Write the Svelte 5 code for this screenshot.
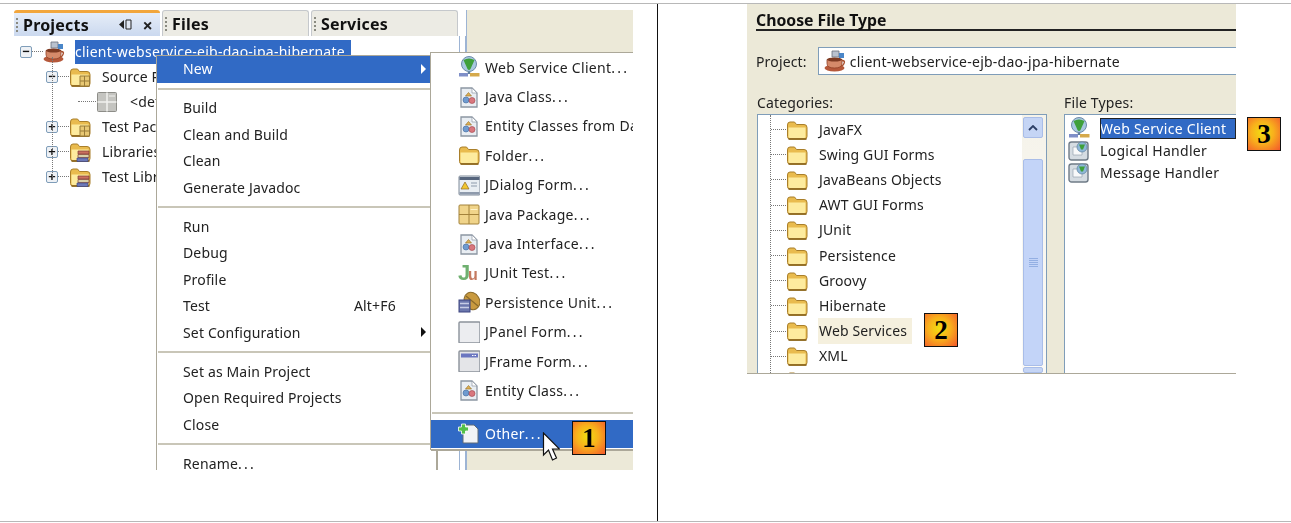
<script lang="ts">
  const tree = [
    { label: 'client-webservice-ejb-dao-jpa-hibernate', level: 0, exp: '-', icon: 'cup', selected: true },
    { label: 'Source Packages', level: 1, exp: '-', icon: 'folderPkg' },
    { label: '<default package>', level: 2, exp: '', icon: 'pkg' },
    { label: 'Test Packages', level: 1, exp: '+', icon: 'folderPkg' },
    { label: 'Libraries', level: 1, exp: '+', icon: 'folderLib' },
    { label: 'Test Libraries', level: 1, exp: '+', icon: 'folderLib' },
  ]

  const mainGroups = [
    ['Build', 'Clean and Build', 'Clean', 'Generate Javadoc'],
    ['Run', 'Debug', 'Profile', 'Test', 'Set Configuration'],
    ['Set as Main Project', 'Open Required Projects', 'Close'],
    ['Rename'],
  ]

  const newItems = [
    ['Web Service Client', 'globe'],
    ['Java Class', 'java'],
    ['Entity Classes from Database', 'java'],
    ['Folder', 'folder'],
    ['JDialog Form', 'dialog'],
    ['Java Package', 'pkgGold'],
    ['Java Interface', 'java'],
    ['JUnit Test', 'junit'],
    ['Persistence Unit', 'persist'],
    ['JPanel Form', 'panel'],
    ['JFrame Form', 'frame'],
    ['Entity Class', 'java'],
  ]

  const categories = ['JavaFX', 'Swing GUI Forms', 'JavaBeans Objects', 'AWT GUI Forms', 'JUnit', 'Persistence', 'Groovy', 'Hibernate', 'Web Services', 'XML', '']

  const fileTypes = [
    ['Web Service Client', 'globe'],
    ['Logical Handler', 'handler'],
    ['Message Handler', 'handler'],
  ]
</script>

{#snippet icon(kind)}
  <svg class="icon" viewBox="0 0 22 22" width="22" height="22">
    {#if kind === 'cup'}
      <path d="M8 1h7v6H8z" fill="#b9c2cf" stroke="#68707c" stroke-width=".8" />
      <path d="M15 3h5v5h-5z" fill="#4a86c8" />
      <ellipse cx="10.500" cy="18" rx="10" ry="3.500" fill="#b5583a" />
      <path d="M3 9.500h15v4q0 4.500-7.500 4.500T3 13.500z" fill="#d58a6a" stroke="#8f4026" stroke-width=".8" />
      <path d="M18 10.500q3.500 0 2 3t-3 2" fill="none" stroke="#a9502f" stroke-width="1.400" />
      <ellipse cx="10.500" cy="9.500" rx="7.500" ry="2" fill="#7d3a22" />
    {:else if kind === 'folder' || kind === 'folderPkg' || kind === 'folderLib'}
      <path d="M1.500 6q0-3 2.500-3h4.500l2 2.500h7.500q3 0 3 3v9q0 2.500-2.500 2.500H4q-2.500 0-2.500-2.500z" fill="#e9bb4e" stroke="#a97f2b" />
      <path d="M2.500 8.500h17v9q0 1.500-1.500 1.500H4q-1.500 0-1.500-1.500z" fill="#fdeb9e" />
      <path d="M2.500 20h18" stroke="#8f6a22" stroke-width="1.800" />
      {#if kind === 'folderPkg'}
        <path d="M11 10h9.500v10H11z" fill="#e8c873" stroke="#9a7c38" />
        <path d="M11 15h9.500M15.500 10v10" stroke="#9a7c38" />
      {:else if kind === 'folderLib'}
        <path d="M9 10h11v3H9z" fill="#c96f5f" stroke="#7d3b33" stroke-width=".7" />
        <path d="M9 13.500h11v3H9z" fill="#d8cfa8" stroke="#7d3b33" stroke-width=".7" />
        <path d="M8 17h11v3.500H8z" fill="#6c78b8" stroke="#3d4580" stroke-width=".7" />
      {/if}
    {:else if kind === 'pkg'}
      <rect x="1.500" y="1.500" width="19" height="19" rx="1" fill="#c4c4c0" stroke="#8d8d88" />
      <path d="M1.500 11h19M11 1.500v19" stroke="#f1f1ee" stroke-width="1.500" />
      <path d="M13 5h6" stroke="#f1f1ee" />
    {:else if kind === 'pkgGold'}
      <rect x="1" y="2" width="20" height="19" rx="1" fill="#f0d48a" stroke="#a3823b" />
      <path d="M1 11.500h20M11 2v19" stroke="#a3823b" />
      <path d="M12.500 6.500h7" stroke="#fff3c8" />
    {:else if kind === 'java'}
      <path d="M3 2h11l5 5v14H3z" fill="#e9eef3" stroke="#8c96a3" stroke-width="1.300" />
      <path d="M14 2v5h5z" fill="#fff" stroke="#8c96a3" stroke-width=".7" />
      <path d="M10.500 6.500l3 3.500h-6z" fill="#e0b256" stroke="#8f6a22" stroke-width=".6" />
      <circle cx="8" cy="14" r="3" fill="#6f9bd0" stroke="#3f669b" stroke-width=".6" />
      <circle cx="14" cy="14.500" r="3" fill="#d9777e" stroke="#9c3f46" stroke-width=".6" />
    {:else if kind === 'globe'}
      <path d="M11 14v4" stroke="#607f9f" stroke-width="2.500" />
      <circle cx="11" cy="8" r="7.500" fill="#a8c8e0" stroke="#6d8aa8" />
      <path d="M5.500 4q5.500-3 11 0l-4 9q-1.500 2-3 0z" fill="#3fa03a" />
      <path d="M1 17h9v3.500H1z" fill="#7f8fc8" />
      <path d="M12 17h9.500v3.500H12z" fill="#d5a94c" />
    {:else if kind === 'dialog'}
      <rect x="1" y="2" width="21" height="19" rx="1" fill="#e9eef3" stroke="#7f8a99" />
      <path d="M1.500 3h20v3h-20z" fill="#56657d" />
      <path d="M1.500 18h20v2.500h-20z" fill="#8e9aac" />
      <path d="M7 8l4 7H3z" fill="#f1c62f" stroke="#8f6a22" stroke-width=".7" />
      <path d="M13 9h6M13 12h6" stroke="#8d99ab" stroke-width="1.200" />
    {:else if kind === 'junit'}
      <text x="0" y="18" class="ju j">J</text>
      <text x="10" y="18" class="ju u">u</text>
    {:else if kind === 'persist'}
      <ellipse cx="14" cy="10" rx="7.500" ry="9" fill="#c99a3f" stroke="#8a6a2a" transform="rotate(-30 14 10)" />
      <path d="M8 5l12 10" stroke="#8a6a2a" stroke-width="1.200" />
      <rect x="1" y="9" width="11" height="12" fill="#6b77ad" stroke="#3d4580" />
      <path d="M2 12.500h9M2 16.500h9" stroke="#c7cde6" stroke-width="1.400" />
    {:else if kind === 'panel'}
      <rect x="1" y="1" width="21" height="21" rx="1" fill="#ecedf0" stroke="#8c929b" stroke-width="1.400" />
    {:else if kind === 'frame'}
      <rect x="1" y="1" width="21" height="21" rx="1" fill="#e4e5e8" stroke="#8c929b" stroke-width="1.400" />
      <path d="M3 3.500h17v4H3z" fill="#6a76c0" />
      <path d="M14 5.500h1.500M16.500 5.500H18" stroke="#fff" />
    {:else if kind === 'newFile'}
      <path d="M5 3h11l4 4v14H5z" fill="#f1f3f6" stroke="#5f6b78" />
      <path d="M0.500 5h3V2h4v3h3v4h-3v3h-4V9h-3z" fill="#54c04a" stroke="#fff" stroke-width=".8" />
    {:else if kind === 'handler'}
      <rect x="1" y="3" width="19" height="18" rx="2.500" fill="#d5dce2" stroke="#6f7b87" stroke-width="1.400" />
      <path d="M5 8h9v8H5z" fill="#f8f9fa" stroke="#9aa5b0" stroke-width=".7" />
      <circle cx="14" cy="8" r="5" fill="#8fb8d8" stroke="#5a7f9f" stroke-width=".7" />
      <path d="M11 5.500h6l-2 5h-2z" fill="#3fa03a" />
    {/if}
  </svg>
{/snippet}

{#snippet badge(n)}
  <span class="badge">{n}</span>
{/snippet}

{#snippet dotted(text)}
  {text}<span class="ell">...</span>
{/snippet}

<div class="page">
  <section class="left">
    <div class="shot ide">
      <div class="tabs">
        <div class="tab active">
          <span class="grip"></span><span class="tab-title">Projects</span>
          <span class="tab-tools">
            <svg viewBox="0 0 13 11" width="13" height="11"><path d="M5 1v9L0 5.500z" fill="#222" /><path d="M7 1h5v9H7z" fill="#dfe6f2" stroke="#222" /></svg>
            <b>×</b>
          </span>
        </div>
        <div class="tab"><span class="grip"></span><span class="tab-title">Files</span></div>
        <div class="tab"><span class="grip"></span><span class="tab-title">Services</span></div>
        <div class="tab-rest"></div>
      </div>
      <div class="ide-body">
        <div class="tree">
          <span class="trunk"></span>
          {#each tree as node}
            <div class="node lvl{node.level}">
              {#if node.exp}
                <span class="exp">{node.exp === '-' ? '−' : '+'}</span>
              {/if}
              <span class="dots"></span>
              {@render icon(node.icon)}
              <span class="node-label" class:selected={node.selected}>{node.label}</span>
            </div>
          {/each}
        </div>
        <div class="splitter"></div>
        <div class="editor"></div>
      </div>

      <div class="menu main-menu">
        <div class="row active">New<span class="arrow white"></span></div>
        {#each mainGroups as group}
          <div class="sep"></div>
          {#each group as item}
            <div class="row">
              {#if item === 'Rename'}
                <span>{@render dotted(item)}</span>
              {:else}
                {item}
              {/if}
              {#if item === 'Test'}<span class="shortcut">Alt+F6</span>{/if}
              {#if item === 'Set Configuration'}<span class="arrow"></span>{/if}
            </div>
          {/each}
        {/each}
      </div>

      <div class="menu new-menu">
        {#each newItems as [label, kind]}
          <div class="new-row">{@render icon(kind)}<span>{@render dotted(label)}</span></div>
        {/each}
        <div class="sep tight"></div>
        <div class="new-row active">{@render icon('newFile')}<span>{@render dotted('Other')}</span></div>
      </div>

      <svg class="cursor" viewBox="0 0 18 30" width="18" height="30">
        <path d="M1.500 1v22l5-5 4 10 4-2-4-9h7z" fill="#fff" stroke="#111" stroke-width="1.200" />
      </svg>
      <div class="badge-one">{@render badge(1)}</div>
    </div>
  </section>

  <section class="right">
    <div class="wizard-wrap">
      <div class="shot wizard">
        <h2>Choose File Type</h2>
        <div class="project">
          <span>Project:</span>
          <div class="combo">{@render icon('cup')}<span>client-webservice-ejb-dao-jpa-hibernate</span></div>
        </div>
        <div class="lists">
          <div class="col cat-col">
            <div class="list-title">Categories:</div>
            <div class="list cat-list">
              <div class="cats">
                <span class="cat-trunk"></span>
                {#each categories as cat}
                  <div class="cat">
                    <span class="cat-dots"></span>
                    {@render icon('folder')}
                    {#if cat}<span class="cat-label" class:hilite={cat === 'Web Services'}>{cat}</span>{/if}
                  </div>
                {/each}
              </div>
              <div class="scrollbar">
                <div class="scroll-up"><svg viewBox="0 0 10 6" width="10" height="6"><path d="M1 5l4-4 4 4" fill="none" stroke="#2c3f66" stroke-width="1.800" /></svg></div>
                <div class="scroll-thumb"><span class="thumb-grip"></span></div>
                <div class="scroll-down"></div>
              </div>
            </div>
          </div>
          <div class="col type-col">
            <div class="list-title">File Types:</div>
            <div class="list type-list">
              {#each fileTypes as [label, kind], i}
                <div class="type">{@render icon(kind)}<span class="type-label" class:selected={i === 0}>{label}</span></div>
              {/each}
            </div>
          </div>
        </div>
      </div>
      <div class="callouts">
        <div class="badge-three">{@render badge(3)}</div>
      </div>
      <div class="badge-two">{@render badge(2)}</div>
    </div>
  </section>
</div>

<style>
  :global(body) {
    margin: 0;
    background: #fff;
  }

  .page {
    display: grid;
    grid-template-columns: 658px 1fr;
    box-sizing: border-box;
    height: 519px;
    margin-top: 3px;
    border-top: 1px solid #b8b8b8;
    border-bottom: 1px solid #b8b8b8;
    font-family: 'Noto Sans', Tahoma, sans-serif;
    font-size: 14px;
    letter-spacing: 0.15px;
    color: #222;
    overflow: hidden;
  }

  .left {
    border-right: 1px solid #111;
    padding: 6px 0 0 14px;
  }

  .shot {
    position: relative;
    overflow: hidden;
    filter: blur(0.35px);
  }

  .ell {
    letter-spacing: 2.200px;
  }

  .ide {
    width: 619px;
    height: 460px;
    background: #fff;
  }

  .tabs {
    display: flex;
    height: 26px;
    gap: 2px;
  }

  .tab {
    box-sizing: border-box;
    width: 147px;
    display: flex;
    align-items: center;
    padding-left: 2px;
    background: #ecebe4;
    border: 1px solid #c5c8cc;
    border-bottom: none;
    border-radius: 3px 3px 0 0;
  }

  .tab.active {
    width: 146px;
    border: none;
    border-top: 3px solid #f2a63c;
    background: linear-gradient(#e6edf8, #cbd9ef);
  }

  .tab-rest {
    flex: 1;
    background: #fff;
  }

  .grip {
    width: 2px;
    height: 14px;
    margin-right: 3px;
    border-left: 2px dotted #8a8a80;
  }

  .tab-title {
    font-weight: 700;
    font-size: 16px;
    letter-spacing: 0.2px;
    color: #111;
  }

  .tab-tools {
    margin-left: auto;
    margin-right: 7px;
    display: flex;
    align-items: center;
    gap: 11px;
    font-size: 18px;
    line-height: 1;
  }

  .ide-body {
    display: flex;
    height: 434px;
  }

  .tree {
    position: relative;
    width: 445px;
    padding-top: 3px;
  }

  .trunk {
    position: absolute;
    left: 38px;
    top: 21px;
    height: 120px;
    border-left: 1px dotted #777;
  }

  .node {
    display: flex;
    align-items: center;
    height: 25px;
  }

  .lvl0 {
    padding-left: 6px;
  }

  .lvl1 {
    padding-left: 32px;
  }

  .lvl2 {
    padding-left: 64px;
  }

  .exp {
    box-sizing: border-box;
    width: 12px;
    height: 12px;
    flex: none;
    display: flex;
    align-items: center;
    justify-content: center;
    font-size: 13px;
    font-weight: 700;
    line-height: 1;
    background: #eef1f5;
    border: 1px solid #7f9db9;
    border-radius: 2px;
    color: #111;
  }

  .dots {
    width: 11px;
    flex: none;
    border-top: 1px dotted #777;
  }

  .lvl2 .dots {
    width: 18px;
  }

  .node-label {
    margin-left: 11px;
    white-space: nowrap;
  }

  .lvl2 .node-label {
    margin-left: 12px;
  }

  .lvl0 .node-label {
    margin-left: 10px;
    padding: 0 6px 0 0;
    line-height: 24px;
    letter-spacing: 0.24px;
  }

  .selected {
    background: #316ac5;
    color: #fff;
  }

  .splitter {
    width: 7px;
    background: #fff;
    border-left: 1px solid #9db4d4;
    border-right: 1px solid #9db4d4;
    box-sizing: border-box;
  }

  .editor {
    flex: 1;
    margin-top: -26px;
    background: #ece9d8;
    border-left: 1px solid #9db4d4;
  }

  .menu {
    position: absolute;
    box-sizing: border-box;
    background: #fff;
    border: 1px solid #aca899;
    box-shadow: 1px 1px 0 #aca899;
  }

  .main-menu {
    left: 142px;
    top: 45px;
    width: 281px;
    height: 440px;
  }

  .new-menu {
    left: 416px;
    top: 42px;
    width: 260px;
    height: 398px;
  }

  .row {
    position: relative;
    box-sizing: border-box;
    height: 26.500px;
    display: flex;
    align-items: center;
    padding: 0 0 1px 26px;
    white-space: nowrap;
  }

  .row.active,
  .new-row.active {
    background: #316ac5;
    color: #fff;
  }

  .shortcut {
    position: absolute;
    left: 197px;
  }

  .arrow {
    position: absolute;
    left: 264px;
    border-left: 5px solid #111;
    border-top: 5px solid transparent;
    border-bottom: 5px solid transparent;
  }

  .arrow.white {
    border-left-color: #fff;
  }

  .sep {
    height: 12.500px;
    display: flex;
    align-items: center;
  }

  .sep::after {
    content: '';
    flex: 1;
    margin: 0 1px;
    border-top: 2px solid #c9c6b8;
  }

  .sep.tight {
    height: 14px;
  }

  .new-row {
    box-sizing: border-box;
    height: 29.400px;
    display: flex;
    align-items: center;
    padding: 0 0 1px 27px;
    gap: 5px;
    white-space: nowrap;
    letter-spacing: 0.3px;
  }

  .new-row.active {
    height: 28px;
  }

  .cursor {
    position: absolute;
    left: 528px;
    top: 422px;
  }

  .badge {
    box-sizing: border-box;
    width: 34px;
    height: 34px;
    display: flex;
    align-items: center;
    justify-content: center;
    background: radial-gradient(circle at 45% 45%, #f0e010 0%, #f8b01c 45%, #f4582c 100%);
    border: 1px solid #111;
    font-family: 'Liberation Serif', serif;
    font-weight: 700;
    font-size: 27px;
    color: #000;
  }

  .badge-one {
    position: absolute;
    left: 558px;
    top: 411px;
  }

  .right {
    padding-left: 89px;
  }

  .wizard-wrap {
    position: relative;
    display: flex;
    gap: 11px;
    align-items: flex-start;
    margin-top: -1px;
  }

  .wizard {
    box-sizing: border-box;
    width: 489px;
    height: 371px;
    background: #ece9d8;
    padding: 7px 0 0 9px;
    border-bottom: 1px solid #aca899;
    flex: none;
  }

  h2 {
    margin: 0;
    font-size: 15.800px;
    font-weight: 700;
    letter-spacing: 0;
    line-height: 20px;
    height: 19px;
    border-bottom: 2px solid #222;
    color: #111;
  }

  .project {
    display: flex;
    align-items: center;
    margin-top: 16px;
    gap: 11px;
  }

  .combo {
    display: flex;
    flex: 1;
    align-items: center;
    gap: 4px;
    box-sizing: border-box;
    height: 28px;
    padding-left: 5px;
    background: #fff;
    border: 1px solid #7f9db9;
    border-right: none;
    letter-spacing: 0.25px;
  }

  .lists {
    display: flex;
    margin-top: 16px;
    margin-left: 1px;
  }

  .col {
    display: flex;
    flex-direction: column;
  }

  .cat-col {
    width: 307px;
  }

  .type-col {
    flex: 1;
  }

  .list-title {
    height: 23px;
    line-height: 24px;
  }

  .list {
    height: 260px;
    box-sizing: border-box;
    background: #fff;
    border: 1px solid #7f9db9;
    overflow: hidden;
  }

  .cat-list {
    display: flex;
    width: 290px;
  }

  .cats {
    position: relative;
    flex: 1;
    padding-top: 2px;
  }

  .cat-trunk {
    position: absolute;
    left: 12px;
    top: 0;
    bottom: 0;
    border-left: 1px dotted #777;
  }

  .cat {
    height: 25.200px;
    display: flex;
    align-items: center;
    padding-left: 13px;
  }

  .cat-dots {
    width: 15px;
    border-top: 1px dotted #777;
    flex: none;
  }

  .cat-label {
    margin-left: 10px;
    padding: 0 1px;
    line-height: 26px;
  }

  .hilite {
    background: #f5f0de;
    padding-right: 5px;
  }

  .scrollbar {
    width: 24px;
    flex: none;
    padding: 2px 3px 0 1px;
    box-sizing: border-box;
    background: linear-gradient(#f5f3ea, #fbfaf6);
  }

  .scroll-up {
    height: 21px;
    display: flex;
    align-items: center;
    justify-content: center;
    background: #c5d5f5;
    border: 1px solid #a9bde8;
    border-radius: 2px;
    box-sizing: border-box;
  }

  .scroll-thumb {
    margin-top: 21px;
    height: 207px;
    display: flex;
    align-items: center;
    justify-content: center;
    background: #c3d4f8;
    border: 1px solid #a9bde8;
    border-radius: 2px;
    box-sizing: border-box;
  }

  .scroll-down {
    height: 6px;
    margin-top: 1px;
    background: #c5d5f5;
    border: 1px solid #a9bde8;
    border-radius: 2px;
    box-sizing: border-box;
  }

  .thumb-grip {
    width: 9px;
    height: 9px;
    background: repeating-linear-gradient(#93afe3 0 1px, transparent 1px 2px);
  }

  .type-list {
    padding-top: 2px;
    border-right: none;
  }

  .type {
    height: 22px;
    display: flex;
    align-items: center;
    padding-left: 3px;
    gap: 10px;
  }

  .type-label {
    flex: 1;
    line-height: 21px;
    white-space: nowrap;
    letter-spacing: 0.3px;
  }

  .type-label.selected {
    outline: 1px solid #222;
    outline-offset: -1px;
  }

  .callouts {
    padding-top: 114px;
  }

  .badge-two {
    position: absolute;
    left: 177px;
    top: 310px;
  }

  .ju {
    font-family: 'Liberation Sans', sans-serif;
    font-weight: 700;
    font-size: 22px;
  }

  .j {
    fill: #6fb070;
  }

  .u {
    font-size: 16px;
    fill: #c47a60;
  }

  .icon {
    flex: none;
  }
</style>
